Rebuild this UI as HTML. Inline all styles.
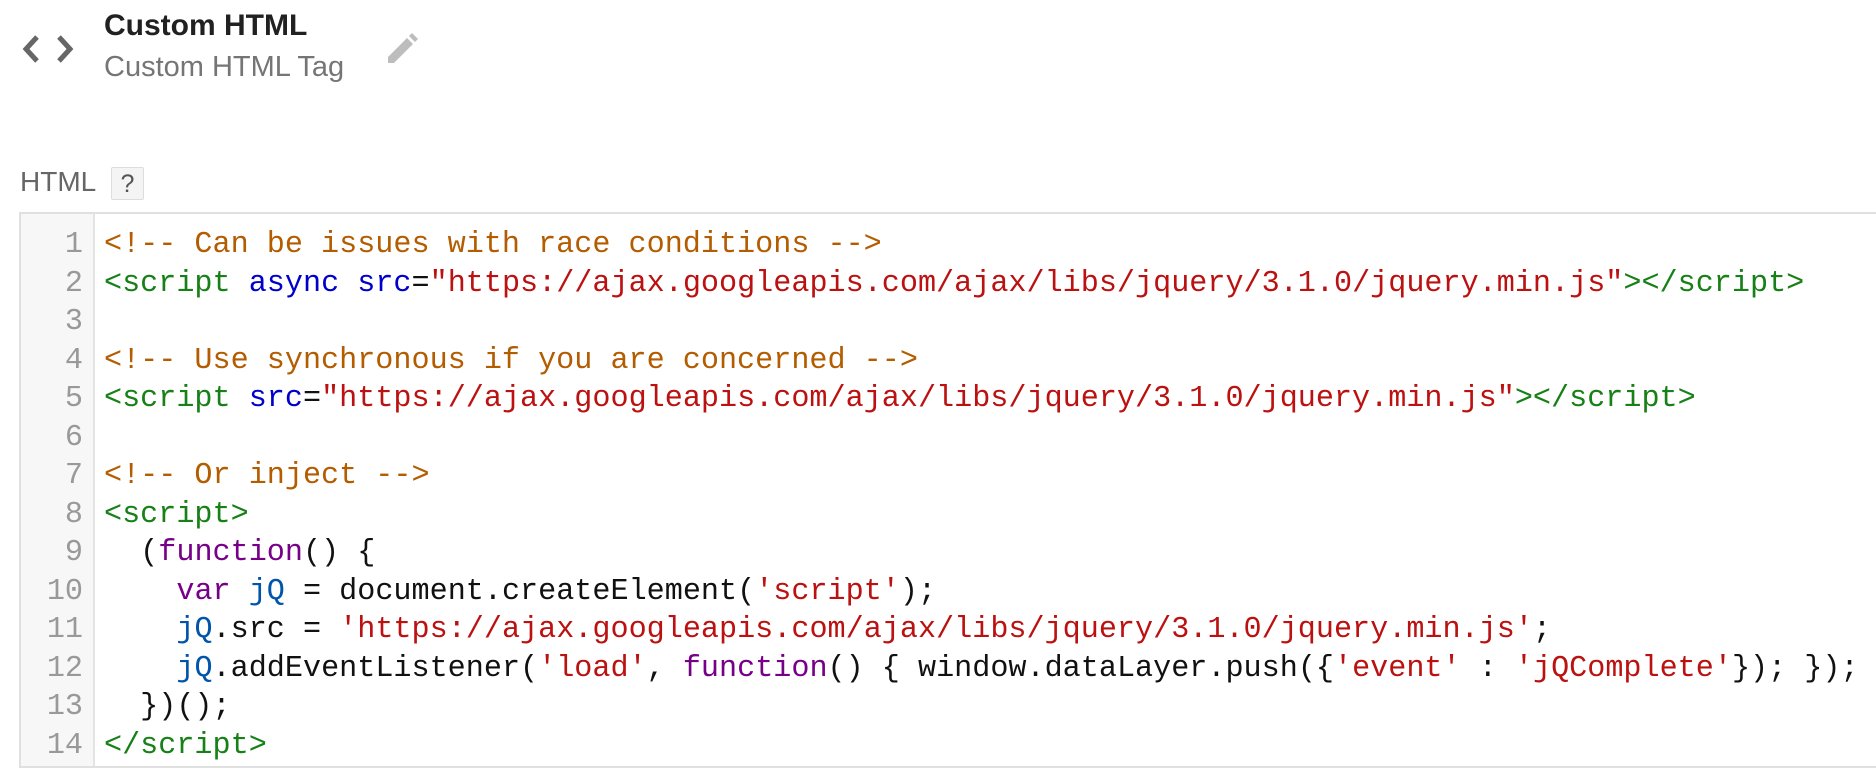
<!DOCTYPE html>
<html><head><meta charset="utf-8"><style>
body{margin:0;width:1876px;height:764px;background:#fff;overflow:hidden;position:relative;font-family:"Liberation Sans",sans-serif}
.t{position:absolute;left:104px;top:9px;font-size:30px;font-weight:bold;color:#212121}
.s{position:absolute;left:104px;top:51px;font-size:29px;color:#757575}
.lbl{position:absolute;left:20px;top:166px;font-size:28px;color:#666}
.q{position:absolute;left:111px;top:167px;width:33px;height:33px;border:1px solid #ddd;background:#f4f4f4;border-radius:2px;box-sizing:border-box;font-size:25px;color:#555;text-align:center;line-height:32px}
.ed{position:absolute;left:19px;top:212px;right:-4px;bottom:-4px;border:2px solid #e0e0e0}
.gut{position:absolute;left:0;top:0;bottom:0;width:72px;background:#f7f7f7;border-right:2px solid #e4e4e4}
.code{position:absolute;left:0;top:12px;font-family:"Liberation Mono",monospace;font-size:30.15px;line-height:38.5px;white-space:pre}
.ln{display:inline-block;width:62px;text-align:right;color:#999;margin-right:21px}
.c{color:#b35c00}.g{color:#178017}.a{color:#0000cc}.r{color:#b11}.k{color:#770088}.v{color:#0055aa}.d{color:#111}
</style></head><body>
<svg style="position:absolute;left:22px;top:33px" width="52" height="32" viewBox="0 0 52 32"><path d="M15 4 L4 16 L15 28" fill="none" stroke="#666" stroke-width="5"/><path d="M37 4 L48 16 L37 28" fill="none" stroke="#666" stroke-width="5"/></svg>
<div class="t">Custom HTML</div>
<div class="s">Custom HTML Tag</div>
<svg style="position:absolute;left:386px;top:33px" width="32" height="32" viewBox="0 0 32 32"><path d="M2 30 L2 24 L21 5 L27 11 L8 30 Z" fill="#bdbdbd"/><path d="M23 3 L26 0 L32 6 L29 9 Z" fill="#bdbdbd"/></svg>
<div class="lbl">HTML</div>
<div class="q">?</div>
<div class="ed"><div class="gut"></div>
<div class="code"><span class="ln">1</span><span class="c">&lt;!-- Can be issues with race conditions --&gt;</span>
<span class="ln">2</span><span class="g">&lt;script</span> <span class="a">async</span> <span class="a">src</span><span class="d">=</span><span class="r">"https://ajax.googleapis.com/ajax/libs/jquery/3.1.0/jquery.min.js"</span><span class="g">&gt;&lt;/script&gt;</span>
<span class="ln">3</span>
<span class="ln">4</span><span class="c">&lt;!-- Use synchronous if you are concerned --&gt;</span>
<span class="ln">5</span><span class="g">&lt;script</span> <span class="a">src</span><span class="d">=</span><span class="r">"https://ajax.googleapis.com/ajax/libs/jquery/3.1.0/jquery.min.js"</span><span class="g">&gt;&lt;/script&gt;</span>
<span class="ln">6</span>
<span class="ln">7</span><span class="c">&lt;!-- Or inject --&gt;</span>
<span class="ln">8</span><span class="g">&lt;script&gt;</span>
<span class="ln">9</span><span class="d">  (</span><span class="k">function</span><span class="d">() {</span>
<span class="ln">10</span><span class="d">    </span><span class="k">var</span> <span class="v">jQ</span><span class="d"> = document.createElement(</span><span class="r">'script'</span><span class="d">);</span>
<span class="ln">11</span><span class="d">    </span><span class="v">jQ</span><span class="d">.src = </span><span class="r">'https://ajax.googleapis.com/ajax/libs/jquery/3.1.0/jquery.min.js'</span><span class="d">;</span>
<span class="ln">12</span><span class="d">    </span><span class="v">jQ</span><span class="d">.addEventListener(</span><span class="r">'load'</span><span class="d">, </span><span class="k">function</span><span class="d">() { window.dataLayer.push({</span><span class="r">'event'</span><span class="d"> : </span><span class="r">'jQComplete'</span><span class="d">}); });</span>
<span class="ln">13</span><span class="d">  })();</span>
<span class="ln">14</span><span class="g">&lt;/script&gt;</span></div>
</div>
</body></html>
